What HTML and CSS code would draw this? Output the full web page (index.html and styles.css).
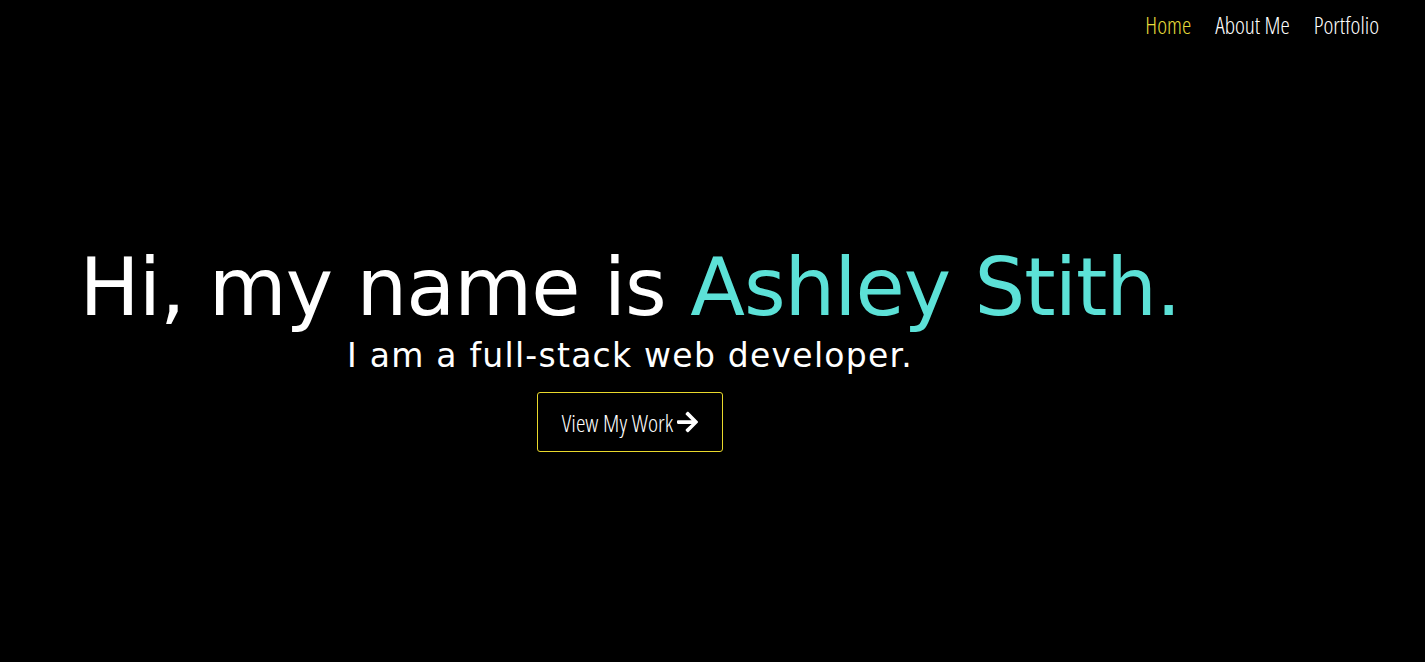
FILE: index.html
```html
<!DOCTYPE html>
<html lang="en">
<head>
<meta charset="utf-8">
<title>Ashley Stith</title>
<link rel="stylesheet" href="styles.css">
</head>
<body>
<nav class="nav">
  <a class="nav-link active" href="#">Home</a>
  <a class="nav-link" href="#">About Me</a>
  <a class="nav-link" href="#">Portfolio</a>
</nav>
<main class="hero">
  <h1 class="title">Hi, my name is <span class="name">Ashley Stith.</span></h1>
  <p class="subtitle">I am a full-stack web developer.</p>
  <a class="btn" href="#">View My Work <svg class="arrow" viewBox="0 0 448 512"><path fill="#fff" d="M190.5 66.9l22.2-22.2c9.4-9.4 24.6-9.4 33.9 0L441 239c9.4 9.4 9.4 24.6 0 33.9L246.6 467.3c-9.4 9.4-24.6 9.4-33.9 0l-22.2-22.2c-9.5-9.5-9.3-25 .4-34.3L311.4 296H24c-13.3 0-24-10.7-24-24v-32c0-13.3 10.7-24 24-24h287.4L190.9 101.2c-9.8-9.3-10-24.8-.4-34.3z"/></svg></a>
</main>
</body>
</html>
```
FILE: styles.css
```css
html, body {
  margin: 0;
  padding: 0;
  background: #000;
  height: 100%;
}
body {
  font-family: "Open Sans", sans-serif;
  color: #fff;
}
.nav {
  display: flex;
  justify-content: flex-end;
  gap: 24px;
  padding: 9px 46px 0 0;
}
.nav-link {
  font-family: "Open Sans", sans-serif;
  font-stretch: 75%;
  font-weight: 300;
  font-size: 23.5px;
  line-height: 33px;
  color: #fff;
  text-decoration: none;
}
.nav-link.active {
  color: #e6dc3a;
}
.hero {
  width: 1260px;
  display: flex;
  flex-direction: column;
  align-items: center;
  padding-top: 198px;
}
.title {
  margin: 0;
  font-family: "DejaVu Sans", sans-serif;
  font-weight: 400;
  font-size: 80px;
  line-height: 96px;
  letter-spacing: -1px;
  white-space: nowrap;
}
.name {
  color: #5ce1d7;
}
.subtitle {
  margin: 0;
  font-family: "DejaVu Sans", sans-serif;
  font-size: 33px;
  line-height: 40px;
  letter-spacing: 1.25px;
}
.btn {
  margin-top: 16px;
  display: flex;
  align-items: center;
  gap: 4px;
  box-sizing: border-box;
  height: 60px;
  padding: 0 24px;
  border: 1px solid #e9d92c;
  border-radius: 3px;
  font-family: "Open Sans", sans-serif;
  font-stretch: 75%;
  font-weight: 300;
  font-size: 24px;
  color: #fff;
  text-decoration: none;
}
.arrow {
  width: 21px;
  height: 24px;
}
```
